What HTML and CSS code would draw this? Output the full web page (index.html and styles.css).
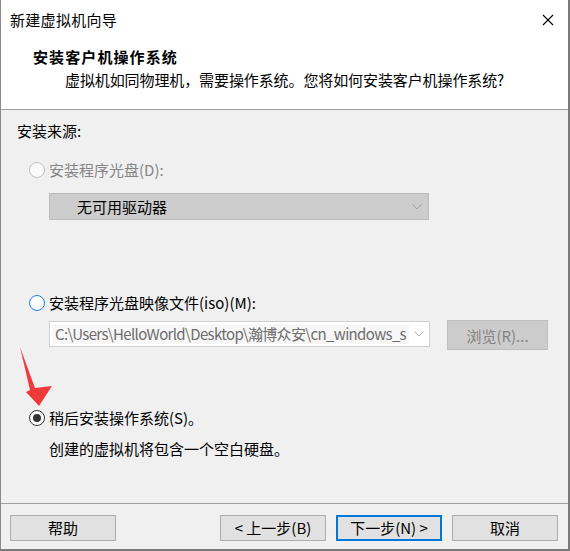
FILE: index.html
```html
<!DOCTYPE html>
<html lang="zh-CN">
<head>
<meta charset="utf-8">
<title>新建虚拟机向导</title>
<link rel="stylesheet" href="styles.css">
</head>
<body>
<div class="window">
  <div class="header">
    <div class="titlebar">
      <span class="title">新建虚拟机向导</span>
      <svg class="close" width="12" height="12" viewBox="0 0 12 12"><path d="M1 1 L11 11 M11 1 L1 11" stroke="#000" stroke-width="1.1" fill="none"/></svg>
    </div>
    <div class="heading">安装客户机操作系统</div>
    <div class="subtitle">虚拟机如同物理机，需要操作系统。您将如何安装客户机操作系统?</div>
  </div>
  <div class="body">
    <div class="label">安装来源:</div>
    <div class="radio-row row-disc disabled">
      <span class="radio radio-disabled"></span>
      <span>安装程序光盘(D):</span>
    </div>
    <div class="combo combo-disabled">
      <span class="combo-text">无可用驱动器</span>
      <svg class="chev" width="10" height="6" viewBox="0 0 10 6"><path d="M0.5 0.5 L5 5 L9.5 0.5" stroke="#a2a2a2" stroke-width="1" fill="none"/></svg>
    </div>
    <div class="radio-row row-iso">
      <span class="radio radio-focus"></span>
      <span>安装程序光盘映像文件(iso)(M):</span>
    </div>
    <div class="iso-row">
      <div class="combo combo-edit">
        <span class="edit-text">C:\Users\HelloWorld\Desktop\瀚博众安\cn_windows_s</span>
        <svg class="chev" width="10" height="6" viewBox="0 0 10 6"><path d="M0.5 0.5 L5 5 L9.5 0.5" stroke="#b0b0b0" stroke-width="1" fill="none"/></svg>
      </div>
      <div class="browse">浏览(R)...</div>
    </div>
    <div class="radio-row row-later">
      <span class="radio radio-checked"></span>
      <span>稍后安装操作系统(S)。</span>
    </div>
    <div class="desc">创建的虚拟机将包含一个空白硬盘。</div>
    <svg class="arrow" width="40" height="64" viewBox="0 0 40 64"><polygon points="1,1 16,42 33,40 20,60 7,46 11,44" fill="#f03a3a"/></svg>
  </div>
  <div class="footer">
    <div class="btn">帮助</div>
    <div class="spacer"></div>
    <div class="btn">&lt; 上一步(B)</div>
    <div class="btn btn-default">下一步(N) &gt;</div>
    <div class="btn">取消</div>
  </div>
</div>
</body>
</html>
```
FILE: styles.css
```css
html, body {
  margin: 0;
  padding: 0;
}
body {
  font-family: "Noto Sans CJK SC", sans-serif;
  font-size: 15px;
  color: #000;
  background: #fff;
}
.window {
  width: 570px;
  height: 551px;
  box-sizing: border-box;
  border-left: 1px solid #8a8a8a;
  border-right: 2px solid #7a7a7a;
  border-bottom: 2px solid #7a7a7a;
  display: flex;
  flex-direction: column;
  overflow: hidden;
}
.header {
  height: 109px;
  background: #fff;
  border-bottom: 1px solid #a0a0a0;
  flex: none;
}
.titlebar {
  display: flex;
  align-items: center;
  justify-content: space-between;
  height: 20px;
  padding: 10px 14px 0 9px;
  line-height: 20px;
}
.title {
  letter-spacing: 0.3px;
}
.close {
  display: block;
}
.heading {
  font-weight: bold;
  line-height: 20px;
  margin-top: 17px;
  padding-left: 32px;
  letter-spacing: 1.1px;
}
.subtitle {
  line-height: 20px;
  margin-top: 3px;
  padding-left: 64px;
  letter-spacing: -0.1px;
}
.body {
  flex: 1;
  background: #f0f0f0;
  padding-top: 11px;
  position: relative;
}
.label {
  line-height: 20px;
  padding-left: 16px;
}
.radio-row {
  display: flex;
  align-items: center;
  gap: 4px;
  height: 20px;
  line-height: 20px;
  padding-left: 28px;
}
.radio {
  width: 16px;
  height: 16px;
  box-sizing: border-box;
  border-radius: 50%;
  border: 1px solid #333;
  background: #fff;
  flex: none;
  position: relative;
}
.radio-disabled {
  border-color: #c2c2c2;
  background: #fbfbfb;
}
.radio-focus {
  border: 1.5px solid #1a82dc;
}
.radio-checked {
  border-color: #333;
}
.radio-checked::after {
  content: "";
  position: absolute;
  left: 3px;
  top: 3px;
  width: 8px;
  height: 8px;
  border-radius: 50%;
  background: #333;
}
.disabled {
  color: #858585;
}
.row-disc {
  margin-top: 19px;
}
.combo {
  display: flex;
  align-items: center;
  box-sizing: border-box;
  margin-left: 48px;
  width: 380px;
  height: 27px;
}
.combo-disabled {
  margin-top: 13px;
  background: #cccccc;
  border: 1px solid #bcbcbc;
}
.combo-text {
  padding-left: 27px;
  flex: 1;
  line-height: 20px;
}
.chev {
  margin-right: 6px;
  display: block;
}
.row-iso {
  margin-top: 73px;
}
.iso-row {
  display: flex;
  align-items: flex-start;
  margin-top: 7px;
}
.combo-edit {
  margin-top: 1px;
  height: 26px;
  background: #fff;
  border: 1px solid #cfcfcf;
  width: 381px;
}
.edit-text {
  flex: 1;
  background: #f7f7f7;
  color: #6d6d6d;
  padding-left: 3px;
  margin: 2px 5px 2px 2px;
  line-height: 20px;
  white-space: nowrap;
  overflow: hidden;
  letter-spacing: -0.65px;
}
.combo-edit .chev {
  margin-right: 5px;
}
.browse {
  margin-left: 17px;
  width: 101px;
  height: 30px;
  box-sizing: border-box;
  background: #cccccc;
  border: 1px solid #bfbfbf;
  color: #838383;
  display: flex;
  align-items: center;
  justify-content: center;
}
.row-later {
  margin-top: 58px;
}
.desc {
  margin-top: 11px;
  line-height: 20px;
  padding-left: 48px;
}
.arrow {
  position: absolute;
  left: 18px;
  top: 236px;
}
.footer {
  flex: none;
  height: 46px;
  box-sizing: border-box;
  border-top: 1px solid #a0a0a0;
  background: #f0f0f0;
  display: flex;
  align-items: flex-start;
  padding: 11px 10px 0 9px;
  gap: 10px;
}
.spacer {
  flex: 1;
}
.btn {
  width: 106px;
  height: 26px;
  box-sizing: border-box;
  background: #e1e1e1;
  border: 1px solid #adadad;
  display: flex;
  align-items: center;
  justify-content: center;
  line-height: 20px;
}
.btn-default {
  border: 2px solid #0078d7;
}
```
